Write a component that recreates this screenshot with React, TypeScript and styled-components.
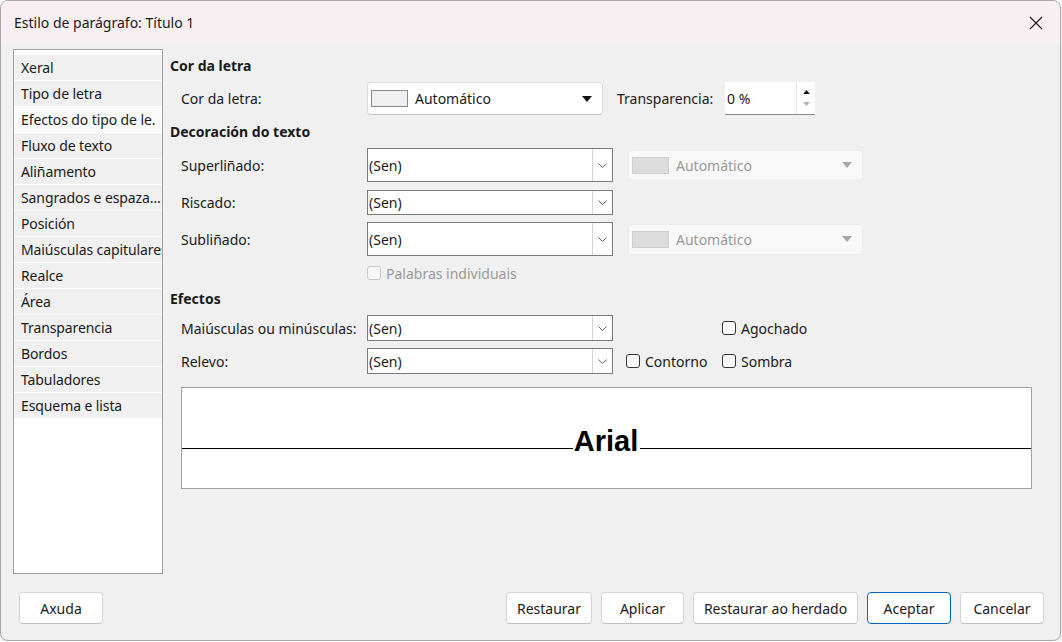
import React from 'react';
import styled, {createGlobalStyle} from "styled-components";

const GlobalStyle = createGlobalStyle`
  html, body {
    margin: 0;
    padding: 0;
    background: #ffffff;
  }
  body {
    font-family: "Noto Sans", "Open Sans", sans-serif;
    font-size: 14px;
    color: #1a1a1a;
  }
`

type SideItemType = {
    title: string
    clip?: boolean
}

const sidebarItems: Array<SideItemType> = [
    {title: "Xeral"},
    {title: "Tipo de letra"},
    {title: "Efectos do tipo de le.", clip: true},
    {title: "Fluxo de texto"},
    {title: "Aliñamento"},
    {title: "Sangrados e espazamento"},
    {title: "Posición"},
    {title: "Maiúsculas capitulares", clip: true},
    {title: "Realce"},
    {title: "Área"},
    {title: "Transparencia"},
    {title: "Bordos"},
    {title: "Tabuladores"},
    {title: "Esquema e lista"},
]

const Chevron = () => (
    <svg width="9" height="5" viewBox="0 0 9 5">
        <path d="M0.5 0.5 L4.5 4.5 L8.5 0.5" fill="none" stroke="#606060" strokeWidth="1"/>
    </svg>
)

const Triangle = ({color}: { color: string }) => (
    <svg width="10" height="6" viewBox="0 0 10 6">
        <path d="M0 0 H10 L5 6 Z" fill={color}/>
    </svg>
)

type ComboProps = {
    height: number
}

const Combo = ({height}: ComboProps) => (
    <ComboBox height={height}>
        <ComboText>(Sen)</ComboText>
        <ComboButton><Chevron/></ComboButton>
    </ComboBox>
)

const ColorList = ({disabled}: { disabled?: boolean }) => (
    <ColorBox disabled={disabled}>
        <Swatch disabled={disabled}/>
        <ColorText disabled={disabled}>Automático</ColorText>
        <Triangle color={disabled ? "#a8a8a8" : "#111"}/>
    </ColorBox>
)

const Check = ({label, disabled}: { label: string, disabled?: boolean }) => (
    <CheckLabel disabled={disabled}>
        <CheckSquare disabled={disabled}/>
        {label}
    </CheckLabel>
)

export default function App() {
    return (
        <>
            <GlobalStyle/>
            <Window>
                <TitleBar>
                    <span>Estilo de parágrafo: Título 1</span>
                    <CloseButton>
                        <svg width="14" height="14" viewBox="0 0 14 14">
                            <path d="M1 1 L13 13 M13 1 L1 13" stroke="#1a1a1a" strokeWidth="1.1"/>
                        </svg>
                    </CloseButton>
                </TitleBar>

                <Main>
                    <Sidebar>
                        {sidebarItems.map((item, i) => (
                            <SideItem key={item.title} selected={i === 2} clip={item.clip}>{item.title}</SideItem>
                        ))}
                    </Sidebar>

                    <Content>
                        <Heading top={7}>Cor da letra</Heading>
                        <Row top={6} height={33}>
                            <Label>Cor da letra:</Label>
                            <ColorList/>
                            <SideLabel>Transparencia:</SideLabel>
                            <SpinField>
                                <SpinText>0 %</SpinText>
                                <SpinButtons>
                                    <Triangle color="#111"/>
                                    <Triangle color="#b0b0b0"/>
                                </SpinButtons>
                            </SpinField>
                        </Row>

                        <Heading top={7}>Decoración do texto</Heading>
                        <Row top={6} height={34}>
                            <Label>Superliñado:</Label>
                            <Combo height={34}/>
                            <Spacer width={15}/>
                            <ColorList disabled/>
                        </Row>
                        <Row top={8} height={25}>
                            <Label>Riscado:</Label>
                            <Combo height={25}/>
                        </Row>
                        <Row top={7} height={34}>
                            <Label>Subliñado:</Label>
                            <Combo height={34}/>
                            <Spacer width={15}/>
                            <ColorList disabled/>
                        </Row>
                        <Row top={8} height={18}>
                            <Label/>
                            <Check label="Palabras individuais" disabled/>
                        </Row>

                        <Heading top={7}>Efectos</Heading>
                        <Row top={6} height={26}>
                            <Label>Maiúsculas ou minúsculas:</Label>
                            <Combo height={26}/>
                            <Spacer width={109}/>
                            <Check label="Agochado"/>
                        </Row>
                        <Row top={7} height={26}>
                            <Label>Relevo:</Label>
                            <Combo height={26}/>
                            <Spacer width={13}/>
                            <CheckCell>
                                <Check label="Contorno"/>
                            </CheckCell>
                            <Check label="Sombra"/>
                        </Row>

                        <Preview>
                            <PreviewLine>
                                <Rule/>
                                <PreviewText>Arial</PreviewText>
                                <Rule/>
                            </PreviewLine>
                        </Preview>
                    </Content>
                </Main>

                <Footer>
                    <Button width={84}>Axuda</Button>
                    <FooterRight>
                        <Button width={86}>Restaurar</Button>
                        <Button width={83}>Aplicar</Button>
                        <Button width={165}>Restaurar ao herdado</Button>
                        <Button width={84} primary>Aceptar</Button>
                        <Button width={84}>Cancelar</Button>
                    </FooterRight>
                </Footer>
            </Window>
        </>
    );
}

type DisabledProps = {
    disabled?: boolean
}
type SpacingProps = {
    top: number
    height?: number
}

const Window = styled.div`
  box-sizing: border-box;
  width: 1061px;
  height: 641px;
  border: 1px solid #a9a9a9;
  border-radius: 8px;
  overflow: hidden;
  background: #f0f0f0;
  display: flex;
  flex-direction: column;
  box-shadow: 0 2px 6px rgba(0, 0, 0, 0.15);
`
const TitleBar = styled.div`
  height: 43px;
  flex-shrink: 0;
  background: #f8eff3;
  display: flex;
  align-items: center;
  justify-content: space-between;
  padding: 0 17px 0 13px;
  font-size: 14px;
  color: #1a1a1a;
`
const CloseButton = styled.div`
  display: flex;
  align-items: center;
`
const Main = styled.div`
  display: flex;
  padding: 5px 0 0 12px;
  height: 525px;
  flex-shrink: 0;
`
const Sidebar = styled.div`
  box-sizing: border-box;
  width: 150px;
  height: 525px;
  border: 1px solid #a0a0a0;
  background: #ffffff;
  padding-top: 5px;
`
const SideItem = styled.div<{ selected?: boolean, clip?: boolean }>`
  height: 25px;
  line-height: 25px;
  border-bottom: 1px solid #ffffff;
  background: ${props => props.selected ? "#fafafa" : "#f0f0f0"};
  padding-left: 7px;
  white-space: nowrap;
  overflow: hidden;
  text-overflow: ${props => props.clip ? "clip" : "ellipsis"};
  font-size: 14px;
  letter-spacing: -0.1px;
  color: #1a1a1a;
`
const Content = styled.div`
  margin-left: 7px;
  display: flex;
  flex-direction: column;
`
const Heading = styled.div<SpacingProps>`
  margin-top: ${props => props.top}px;
  height: 20px;
  line-height: 20px;
  font-weight: bold;
  font-size: 14px;
`
const Row = styled.div<SpacingProps>`
  margin-top: ${props => props.top}px;
  height: ${props => props.height}px;
  display: flex;
  align-items: center;
`
const Label = styled.div`
  width: 197px;
  padding-left: 11px;
  box-sizing: border-box;
  flex-shrink: 0;
  white-space: nowrap;
`
const SideLabel = styled.div`
  margin-left: 14px;
  width: 108px;
  flex-shrink: 0;
`
const Spacer = styled.div<{ width: number }>`
  width: ${props => props.width}px;
  flex-shrink: 0;
`
const ComboBox = styled.div<{ height: number }>`
  box-sizing: border-box;
  width: 246px;
  height: ${props => props.height}px;
  border: 1px solid #7a7a7a;
  background: #ffffff;
  display: flex;
  align-items: stretch;
  flex-shrink: 0;
`
const ComboText = styled.div`
  flex: 1;
  display: flex;
  align-items: center;
  padding-left: 1px;
`
const ComboButton = styled.div`
  width: 19px;
  border-left: 1px solid #d4d4d4;
  display: flex;
  align-items: center;
  justify-content: center;
`
const ColorBox = styled.div<DisabledProps>`
  box-sizing: border-box;
  width: ${props => props.disabled ? 235 : 236}px;
  height: ${props => props.disabled ? 31 : 33}px;
  border: 1px solid ${props => props.disabled ? "#ececec" : "#dcdcdc"};
  border-bottom-color: ${props => props.disabled ? "#ececec" : "#c4c4c4"};
  border-radius: 4px;
  background: ${props => props.disabled ? "#f8f8f8" : "#ffffff"};
  display: flex;
  align-items: center;
  padding: 0 10px 0 3px;
  flex-shrink: 0;
`
const Swatch = styled.div<DisabledProps>`
  box-sizing: border-box;
  width: 37px;
  height: 17px;
  border: 1px solid ${props => props.disabled ? "#cfcfcf" : "#8a8a8a"};
  background: ${props => props.disabled ? "#dcdcdc" : "#efefef"};
  flex-shrink: 0;
`
const ColorText = styled.div<DisabledProps>`
  flex: 1;
  margin-left: 7px;
  color: ${props => props.disabled ? "#9a9a9a" : "#1a1a1a"};
`
const SpinField = styled.div`
  box-sizing: border-box;
  width: 90px;
  height: 33px;
  background: #ffffff;
  border-bottom: 1px solid #8a8a8a;
  display: flex;
  flex-shrink: 0;
`
const SpinText = styled.div`
  flex: 1;
  display: flex;
  align-items: center;
  padding-left: 2px;
`
const SpinButtons = styled.div`
  width: 18px;
  border-left: 1px solid #e4e4e4;
  display: flex;
  flex-direction: column;
  align-items: center;
  justify-content: space-around;
  padding: 4px 0;

  svg {
    width: 7px;
    height: 4px;
  }

  svg:first-child {
    transform: rotate(180deg);
  }
`
const CheckLabel = styled.label<DisabledProps>`
  display: flex;
  align-items: center;
  gap: 5px;
  white-space: nowrap;
  color: ${props => props.disabled ? "#9a9a9a" : "#1a1a1a"};
`
const CheckSquare = styled.span<DisabledProps>`
  box-sizing: border-box;
  width: 14px;
  height: 14px;
  border: 1px solid ${props => props.disabled ? "#c8c8c8" : "#333333"};
  border-radius: 3px;
  background: ${props => props.disabled ? "#f8f8f8" : "#ffffff"};
`
const CheckCell = styled.div`
  width: 96px;
  flex-shrink: 0;
`
const Preview = styled.div`
  box-sizing: border-box;
  margin-top: 13px;
  margin-left: 11px;
  width: 851px;
  height: 102px;
  border: 1px solid #a0a0a0;
  background: #ffffff;
  padding-top: 34px;
`
const PreviewLine = styled.div`
  display: flex;
  align-items: flex-end;
  height: 27px;
`
const Rule = styled.div`
  flex: 1;
  height: 1px;
  background: #000000;
`
const PreviewText = styled.div`
  font-family: "Liberation Sans", Arial, sans-serif;
  font-weight: bold;
  font-size: 29px;
  line-height: 27px;
  padding: 0 2px 0 1px;
  margin-bottom: -6px;
  color: #000000;
`
const Footer = styled.div`
  display: flex;
  justify-content: space-between;
  padding: 18px 16px 0 18px;
`
const FooterRight = styled.div`
  display: flex;
  gap: 9px;
`
const Button = styled.button<{ width: number, primary?: boolean }>`
  box-sizing: border-box;
  width: ${props => props.width}px;
  height: 32px;
  background: #ffffff;
  border: 1px solid ${props => props.primary ? "#0067c0" : "#d4d4d4"};
  border-bottom-color: ${props => props.primary ? "#0067c0" : "#c0c0c0"};
  border-radius: 4px;
  font-family: "Noto Sans", "Open Sans", sans-serif;
  font-size: 14px;
  color: #1a1a1a;
  padding: 0;
`
